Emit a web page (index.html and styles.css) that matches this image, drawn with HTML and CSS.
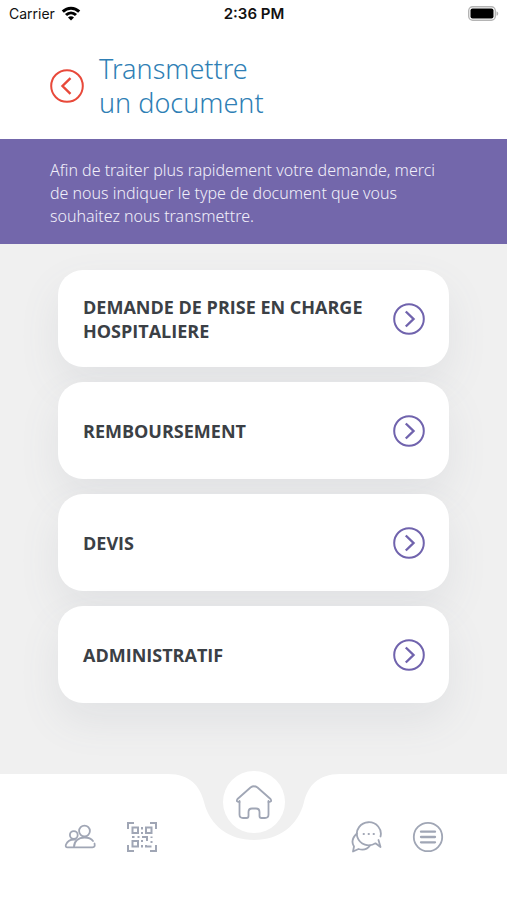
FILE: index.html
```html
<!DOCTYPE html>
<html lang="fr">
<head>
  <meta charset="UTF-8" />
  <meta name="viewport" content="width=device-width, initial-scale=1.0"/>
  <title>Transmettre un document</title>
  <link rel="stylesheet" href="styles.css">
</head>
<body>
  <div class="status-bar">
    <div class="carrier">
      <span>Carrier</span>
      <svg width="20" height="15" viewBox="0 0 20 15" fill="none" stroke="#000" stroke-width="3">
        <path d="M1.8 5.6C6.5 1 13.5 1 18.2 5.6"/>
        <path d="M5 9C7.9 6.2 12.1 6.2 15 9"/>
        <path d="M10 14.5L7 11.5C8.7 9.9 11.3 9.9 13 11.5Z" fill="#000" stroke="none"/>
      </svg>
    </div>
    <span class="time">2:36 PM</span>
    <svg class="battery" width="31" height="15" viewBox="0 0 31 15">
      <rect x="0.7" y="0.7" width="26.6" height="13.6" rx="4" fill="#fff" stroke="#b4b4b4" stroke-width="1.4"/>
      <rect x="2.5" y="2.5" width="23" height="10" rx="2" fill="#000"/>
      <path d="M28.5 5.2C30.8 6 30.8 9 28.5 9.8Z" fill="#b4b4b4"/>
    </svg>
  </div>

  <header class="header">
    <button type="button" class="back-btn" aria-label="Retour">
      <svg width="34" height="34" viewBox="0 0 34 34" fill="none" stroke="#e8493a" stroke-width="2">
        <circle cx="17" cy="17" r="15.8"/>
        <path d="M20.5 9.2L12.5 17L20.5 24.8" stroke-width="2.4"/>
      </svg>
    </button>
    <h1>Transmettre<br>un document</h1>
  </header>

  <p class="intro">Afin de traiter plus rapidement votre demande, merci de nous indiquer le type de document que vous souhaitez nous transmettre.</p>

  <main class="choices">
    <button type="button" class="choice">
      <span>DEMANDE DE PRISE EN CHARGE HOSPITALIERE</span>
      <svg class="arrow" viewBox="0 0 32 32"><circle cx="16" cy="16" r="14.8"/><path d="M12.8 8.5L20.5 16L12.8 23.5"/></svg>
    </button>
    <button type="button" class="choice">
      <span>REMBOURSEMENT</span>
      <svg class="arrow" viewBox="0 0 32 32"><circle cx="16" cy="16" r="14.8"/><path d="M12.8 8.5L20.5 16L12.8 23.5"/></svg>
    </button>
    <button type="button" class="choice">
      <span>DEVIS</span>
      <svg class="arrow" viewBox="0 0 32 32"><circle cx="16" cy="16" r="14.8"/><path d="M12.8 8.5L20.5 16L12.8 23.5"/></svg>
    </button>
    <button type="button" class="choice">
      <span>ADMINISTRATIF</span>
      <svg class="arrow" viewBox="0 0 32 32"><circle cx="16" cy="16" r="14.8"/><path d="M12.8 8.5L20.5 16L12.8 23.5"/></svg>
    </button>
  </main>

  <nav class="tab-bar">
    <svg class="notch" width="172" height="66" viewBox="0 0 172 66">
      <path d="M0 0C22 0 32 12 36 28C42 52 61 66 86 66C111 66 130 52 136 28C140 12 150 0 172 0Z" fill="#f0f0f0"/>
    </svg>
    <a href="#" class="home" aria-label="Accueil">
      <svg width="38" height="36" viewBox="0 0 38 36">
        <path d="M4.5 17V30.5Q4.5 34 8 34H11.5Q13.5 34 13.5 32V28Q13.5 24.5 17 24.5H21Q24.5 24.5 24.5 28V32Q24.5 34 26.5 34H30Q33.5 34 33.5 30.5V17"/>
        <path d="M4.5 18Q0.5 18 2.5 15L15.5 3.5Q19 1 22.5 3.5L35.5 15Q37.5 18 33.5 18"/>
      </svg>
    </a>
    <div class="tabs">
      <a href="#" aria-label="Famille">
        <svg width="32" height="32" viewBox="0 0 32 32">
          <circle cx="20.5" cy="10" r="5.4"/>
          <circle cx="9.8" cy="14" r="3.9"/>
          <path d="M30.5 22.5Q31.5 26.3 28.5 26.3H3.5Q1 26.3 2 23.5C3.5 19.8 6.5 18.3 11 18.5"/>
          <path d="M10 26C10 20 14.500 16.5 20.5 16.5C24.5 16.5 27.5 17.8 29 20"/>
        </svg>
      </a>
      <a href="#" aria-label="QR code">
        <svg width="32" height="32" viewBox="0 0 32 32" class="qr">
          <path d="M2 8V2H8M24 2H30V8M30 24V30H24M8 30H2V24"/>
          <path d="M6.5 6.5H12V12H6.5ZM20 6.5H25.5V12H20ZM6.5 20H12V25.5H6.5Z"/>
          <path d="M16 6V8.5M16 11V13M6 16H8.5M11.5 16H13.5M16 16H21V20M16 19V21M16 24V26.5M25.5 15.5V17M25.5 20V22M20 24V25.5H25.5"/>
        </svg>
      </a>
      <a href="#" class="messages" aria-label="Messages">
        <svg width="32" height="32" viewBox="0 0 32 32">
          <path d="M30.5 15.5A12 11.5 0 1 0 25.5 22.3L30.5 26L28.5 19"/>
          <path d="M7 12.5C2.5 16.5 1.5 21.5 4 25.5L3 30.5L8.5 28C13 29.5 17.5 28 20 24.5"/>
          <path d="M13.5 13H14M18.5 13H19M23.5 13H24"/>
        </svg>
      </a>
      <a href="#" aria-label="Menu">
        <svg width="32" height="32" viewBox="0 0 32 32">
          <circle cx="16" cy="16" r="14.2"/>
          <path d="M9 10.7H23M9 16H23M9 21.3H23" stroke-width="2.3"/>
        </svg>
      </a>
    </div>
  </nav>
</body>
</html>
```
FILE: styles.css
```css
* {
  box-sizing: border-box;
}
body {
  font-family: "Open Sans", "Noto Sans", sans-serif;
  background: #f0f0f0;
  margin: 0;
  min-height: 100vh;
  display: flex;
  flex-direction: column;
}
svg {
  display: block;
}
button {
  font-family: inherit;
  border: none;
  cursor: pointer;
}
.status-bar {
  display: grid;
  grid-template-columns: 1fr auto 1fr;
  align-items: center;
  height: 27px;
  padding: 0 8px 0 9px;
  background: #fff;
  color: #111;
  font-family: Inter, sans-serif;
  font-size: 14px;
}
.carrier {
  display: flex;
  align-items: center;
  gap: 6px;
}
.time {
  font-size: 15px;
  font-weight: 600;
}
.battery {
  justify-self: end;
}
.header {
  display: flex;
  align-items: center;
  gap: 15px;
  padding: 25px 50px 19px;
  background: #fff;
}
.back-btn {
  padding: 0;
  background: none;
}
h1 {
  margin: 0;
  color: #2f7fb5;
  font-family: "Noto Sans", sans-serif;
  font-size: 27px;
  font-weight: 300;
  line-height: 34px;
}
.intro {
  margin: 0;
  padding: 20px 60px 16px 50px;
  background: #7367ab;
  color: #f1effa;
  font-family: "Noto Sans", sans-serif;
  font-size: 16px;
  font-weight: 300;
  line-height: 23px;
}
.choices {
  flex: 1;
  display: flex;
  flex-direction: column;
  gap: 15px;
  padding: 26px 58px 68px;
}
.choice {
  display: flex;
  align-items: center;
  justify-content: space-between;
  gap: 20px;
  min-height: 97px;
  padding: 20px 24px 20px 25px;
  background: #fff;
  border-radius: 25px;
  box-shadow: 0 18px 40px rgba(100, 104, 125, 0.1);
  color: #3b4045;
  font-size: 18px;
  font-weight: 700;
  line-height: 24px;
  text-align: left;
}
.arrow {
  flex: none;
  width: 32px;
  height: 32px;
  fill: none;
  stroke: #7063ad;
  stroke-width: 2;
}
.arrow path {
  stroke-width: 2.4px;
}
.tab-bar {
  position: relative;
  padding: 47px 63px 47px 64px;
  background: #fff;
}
.tab-bar svg {
  fill: none;
  stroke: #a0a6b5;
  stroke-width: 1.8px;
  stroke-linecap: round;
  stroke-linejoin: round;
}
.tab-bar .qr {
  stroke-width: 2px;
  stroke-linecap: butt;
  stroke-linejoin: miter;
}
.tab-bar .notch {
  position: absolute;
  top: 0;
  left: 50%;
  transform: translateX(-50%);
  stroke: none;
}
.home {
  position: absolute;
  top: -3px;
  left: 50%;
  transform: translateX(-50%);
  display: flex;
  align-items: center;
  justify-content: center;
  width: 62px;
  height: 62px;
  border-radius: 50%;
  background: #fff;
}
.tabs {
  display: flex;
  gap: 30px;
}
.messages {
  margin-left: auto;
}
```
